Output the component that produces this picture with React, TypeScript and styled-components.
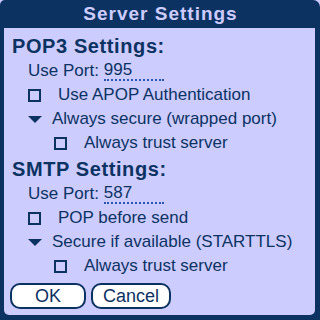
import styled, { createGlobalStyle } from "styled-components";

const navy = "#0c3262";
const lilac = "#ccccff";

const Global = createGlobalStyle`
  html, body {
    margin: 0;
    padding: 0;
    background: ${lilac};
  }
  body {
    width: 320px;
    height: 320px;
    overflow: hidden;
    font-family: "Liberation Sans", Arial, sans-serif;
  }
`;

const Dialog = styled.div`
  width: 320px;
  height: 320px;
  box-sizing: border-box;
  background: ${navy};
  border-radius: 5px 7px 0 0;
  padding: 0 5px 5px 4px;
  display: flex;
  flex-direction: column;
`;

const TitleBar = styled.div`
  height: 28px;
  display: flex;
  align-items: center;
  justify-content: center;
  color: ${lilac};
  font-weight: bold;
  font-size: 19px;
  letter-spacing: 1px;
  padding-left: 2px;
`;

const Body = styled.div`
  flex: 1;
  background: ${lilac};
  border-radius: 0 0 5px 5px;
  padding: 6px 0 6px 8px;
  display: flex;
  flex-direction: column;
  color: ${navy};
`;

const Heading = styled.div<{ $gap?: number }>`
  font-weight: bold;
  font-size: 20px;
  letter-spacing: 0.6px;
  height: 25px;
  line-height: 25px;
  margin-top: ${(p) => p.$gap ?? 0}px;
`;

const Row = styled.div<{ $indent: number }>`
  display: flex;
  align-items: center;
  height: 24px;
  font-size: 17px;
  padding-left: ${(p) => p.$indent}px;
`;

const Field = styled.span`
  display: inline-block;
  width: 60px;
  margin-left: 5px;
  line-height: 18px;
  border-bottom: 2px dotted #2a55b0;
`;

const Box = styled.span`
  display: block;
  width: 13px;
  height: 13px;
  min-width: 13px;
  box-sizing: border-box;
  border: 2px solid ${navy};
  margin-right: 17px;
  flex-shrink: 0;
`;

const Tri = styled.svg`
  width: 14px;
  height: 7px;
  margin-right: 10px;
  flex-shrink: 0;
`;

const Buttons = styled.div`
  margin-top: auto;
  display: flex;
  gap: 5px;
  margin-left: -2px;
`;

const Button = styled.button<{ $w: number }>`
  width: ${(p) => p.$w}px;
  height: 26px;
  background: #fff;
  border: 2px solid ${navy};
  border-radius: 10px;
  color: ${navy};
  font-family: "Liberation Sans", Arial, sans-serif;
  font-size: 18px;
  padding: 0;
  line-height: 20px;
`;

const Check = ({ label, indent }: { label: string; indent: number }) => (
  <Row $indent={indent}>
    <Box />
    {label}
  </Row>
);

const Popup = ({ label, indent }: { label: string; indent: number }) => (
  <Row $indent={indent}>
    <Tri viewBox="0 0 14 7">
      <polygon points="0,0 14,0 7,7" fill={navy} />
    </Tri>
    {label}
  </Row>
);

export default function App() {
  return (
    <Dialog>
      <Global />
      <TitleBar>Server Settings</TitleBar>
      <Body>
        <Heading>POP3 Settings:</Heading>
        <Row $indent={16}>
          Use Port:<Field>995</Field>
        </Row>
        <Check label="Use APOP Authentication" indent={16} />
        <Popup label="Always secure (wrapped port)" indent={16} />
        <Check label="Always trust server" indent={42} />
        <Heading $gap={2}>SMTP Settings:</Heading>
        <Row $indent={16}>
          Use Port:<Field>587</Field>
        </Row>
        <Check label="POP before send" indent={16} />
        <Popup label="Secure if available (STARTTLS)" indent={16} />
        <Check label="Always trust server" indent={42} />
        <Buttons>
          <Button $w={76}>OK</Button>
          <Button $w={80}>Cancel</Button>
        </Buttons>
      </Body>
    </Dialog>
  );
}
